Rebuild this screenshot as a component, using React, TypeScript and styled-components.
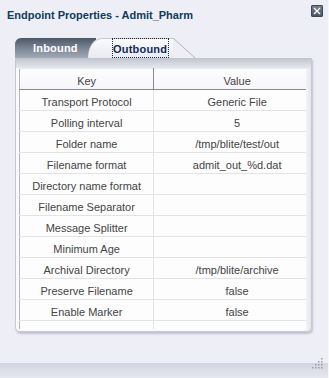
import styled, { createGlobalStyle } from 'styled-components';

const GlobalStyle = createGlobalStyle`
  html, body {
    margin: 0;
    padding: 0;
    background: #eeeef7;
  }
  body {
    font-family: "Liberation Sans", Arial, sans-serif;
  }
`;

const Dialog = styled.div`
  position: relative;
  width: 329px;
  height: 378px;
  box-sizing: border-box;
  background: #eeeef7;
  border-right: 1px solid #f8f8fc;
  display: flex;
  flex-direction: column;
`;

const TitleBar = styled.div`
  height: 38px;
  box-sizing: border-box;
  padding: 5px 5px 0 7px;
  display: flex;
  justify-content: space-between;
  align-items: flex-start;
`;

const Title = styled.h1`
  margin: 4px 0 0;
  font-size: 11px;
  line-height: 13px;
  font-weight: bold;
  color: #0f3c5c;
`;

const CloseButton = styled.button`
  width: 12px;
  height: 12px;
  padding: 0;
  border: 1px solid #3e4854;
  border-radius: 1px;
  background: linear-gradient(#76808c, #4c5662);
  display: flex;
  align-items: center;
  justify-content: center;
`;

const TabRow = styled.div`
  display: flex;
  height: 20px;
  margin-left: 15px;
`;

const InactiveTab = styled.div`
  width: 63px;
  height: 20px;
  padding-left: 18px;
  border-radius: 6px 0 0 0;
  background: linear-gradient(#4c5868, #7d8896 55%, #a2aab6);
  color: #ffffff;
  font-size: 11px;
  font-weight: bold;
  line-height: 21px;
  letter-spacing: 0.2px;
`;

const ActiveTab = styled.div`
  position: relative;
  z-index: 1;
  margin-left: -8px;
  height: 20px;
  padding: 0 4px 0 24px;
  border-top-left-radius: 14px 20px;
  background: linear-gradient(#fbfbfd, #e9eaf0);
  box-shadow: inset 0 1px 0 #c4c6d0;

  &::after {
    content: '';
    position: absolute;
    left: 100%;
    top: 0;
    width: 22px;
    height: 20px;
    background: linear-gradient(
      to top right,
      #eeeff4 calc(50% - 0.7px),
      #aeb2be 50%,
      transparent calc(50% + 0.8px)
    );
  }
`;

const FocusLabel = styled.span`
  display: block;
  height: 18px;
  padding-right: 1px;
  border: 1px dotted #1c2a44;
  color: #0e2c55;
  font-size: 11px;
  font-weight: bold;
  line-height: 20px;
  letter-spacing: 0.2px;
`;

const Panel = styled.div`
  width: 297px;
  height: 274px;
  margin-left: 15px;
  box-sizing: border-box;
  border: 1px solid #c6c8d2;
  border-top: none;
  border-radius: 0 0 5px 5px;
  background: linear-gradient(90deg, #fbfbfd 97%, #e6e7ee);
  box-shadow: 1px 2px 2px rgba(60, 60, 80, 0.25);
  display: flex;
  flex-direction: column;
`;

const PanelBand = styled.div`
  height: 10px;
  background: linear-gradient(#c0c3cd, #e6e7ee);
`;

const TableWrap = styled.div`
  width: 287px;
  height: 261px;
  margin-left: 3px;
  overflow: hidden;
`;

const Table = styled.table`
  width: 301px;
  border-collapse: collapse;
  table-layout: fixed;
  font-size: 11px;
  color: #444444;
  border-left: 1px solid #b4b6be;
`;

const HeadCell = styled.th<{ $key?: boolean }>`
  height: 16px;
  padding: 4px 0 0;
  line-height: 16px;
  font-weight: normal;
  text-align: center;
  background: linear-gradient(#fdfcfe, #f6f5f9);
  border-top: 1px solid #ecedf2;
  border-bottom: 1px solid #8a8a92;
  border-right: ${(p) => (p.$key ? '1px solid #8a8a92' : 'none')};
`;

const Cell = styled.td<{ $key?: boolean }>`
  height: 16px;
  padding: 4px 0 0;
  line-height: 16px;
  text-align: center;
  white-space: nowrap;
  background: #fdfdfd;
  border-bottom: 1px solid #e3e3e7;
  border-right: ${(p) => (p.$key ? '1px solid #e3e3e7' : 'none')};
`;

const Footer = styled.div`
  position: relative;
  margin-top: auto;
  height: 15px;
  background: linear-gradient(#d3d5e0, #e6e7ef);
`;

const Grip = styled.svg`
  position: absolute;
  right: 5px;
  bottom: 9px;
`;

const rows: [string, string][] = [
  ['Transport Protocol', 'Generic File'],
  ['Polling interval', '5'],
  ['Folder name', '/tmp/blite/test/out'],
  ['Filename format', 'admit_out_%d.dat'],
  ['Directory name format', ''],
  ['Filename Separator', ''],
  ['Message Splitter', ''],
  ['Minimum Age', ''],
  ['Archival Directory', '/tmp/blite/archive'],
  ['Preserve Filename', 'false'],
  ['Enable Marker', 'false'],
  ['', ''],
];

export default function App() {
  return (
    <>
      <GlobalStyle />
      <Dialog>
        <TitleBar>
          <Title>Endpoint Properties - Admit_Pharm</Title>
          <CloseButton aria-label="Close">
            <svg width="8" height="8" viewBox="0 0 8 8">
              <path d="M1 1 L7 7 M7 1 L1 7" stroke="#ffffff" strokeWidth="1.4" />
            </svg>
          </CloseButton>
        </TitleBar>
        <TabRow>
          <InactiveTab>Inbound</InactiveTab>
          <ActiveTab>
            <FocusLabel>Outbound</FocusLabel>
          </ActiveTab>
        </TabRow>
        <Panel>
          <PanelBand />
          <TableWrap>
            <Table>
              <colgroup>
                <col style={{ width: 134 }} />
                <col style={{ width: 166 }} />
              </colgroup>
              <thead>
                <tr>
                  <HeadCell $key>Key</HeadCell>
                  <HeadCell>Value</HeadCell>
                </tr>
              </thead>
              <tbody>
                {rows.map(([k, v], i) => (
                  <tr key={i}>
                    <Cell $key>{k}</Cell>
                    <Cell>{v}</Cell>
                  </tr>
                ))}
              </tbody>
            </Table>
          </TableWrap>
        </Panel>
        <Footer>
          <Grip width="11" height="11" viewBox="0 0 11 11">
            {[
              [9, 0], [6, 3], [9, 3], [3, 6], [6, 6], [9, 6], [0, 9], [3, 9], [6, 9], [9, 9],
            ].map(([x, y], i) => (
              <rect key={i} x={x} y={y} width="1.5" height="1.5" fill="#9a9ca8" />
            ))}
          </Grip>
        </Footer>
      </Dialog>
    </>
  );
}
